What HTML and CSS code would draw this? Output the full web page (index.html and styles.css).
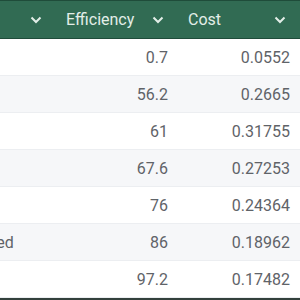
FILE: index.html
```html
<!DOCTYPE html>
<html lang="en">
<head>
  <meta charset="UTF-8" />
  <meta name="viewport" content="width=device-width, initial-scale=1" />
  <title>Runs</title>
  <link rel="stylesheet" href="styles.css">
</head>
<body>
  <div class="viewport">
    <div class="grid">
      <div class="head">
        <div class="cell"><span></span><svg class="chev" viewBox="0 0 12 8"><path d="M1.5 1.5 6 6l4.5-4.5"/></svg></div>
        <div class="cell"><span>Efficiency</span><svg class="chev" viewBox="0 0 12 8"><path d="M1.5 1.5 6 6l4.5-4.5"/></svg></div>
        <div class="cell"><span>Cost</span><svg class="chev" viewBox="0 0 12 8"><path d="M1.5 1.5 6 6l4.5-4.5"/></svg></div>
      </div>

      <div class="row">
        <div class="cell text"></div>
        <div class="cell num">0.7</div>
        <div class="cell num">0.0552</div>
      </div>
      <div class="row">
        <div class="cell text"></div>
        <div class="cell num">56.2</div>
        <div class="cell num">0.2665</div>
      </div>
      <div class="row">
        <div class="cell text"></div>
        <div class="cell num">61</div>
        <div class="cell num">0.31755</div>
      </div>
      <div class="row">
        <div class="cell text"></div>
        <div class="cell num">67.6</div>
        <div class="cell num">0.27253</div>
      </div>
      <div class="row">
        <div class="cell text"></div>
        <div class="cell num">76</div>
        <div class="cell num">0.24364</div>
      </div>
      <div class="row">
        <div class="cell text">Completed</div>
        <div class="cell num">86</div>
        <div class="cell num">0.18962</div>
      </div>
      <div class="row">
        <div class="cell text"></div>
        <div class="cell num">97.2</div>
        <div class="cell num">0.17482</div>
      </div>
      <div class="foot"></div>
    </div>
  </div>
</body>
</html>
```

FILE: styles.css
```css
:root {
  --header-bg: #316b53;
  --header-edge: #1f4c3a;
  --header-text: #e3eee8;
  --text-color: #5f6368;
  --stripe: #f6f7f9;
  --line: #eceef1;
  --foot-bg: #33403c;
}

body {
  margin: 0;
  font-family: Roboto, 'Liberation Sans', sans-serif;
  background: white;
}

.viewport {
  width: 300px;
  height: 300px;
  overflow: hidden;
}

.grid {
  margin-left: -74px;
  width: 374px;
}

.head,
.row {
  display: grid;
  grid-template-columns: 130px 122px 122px;
}

.head {
  height: 37px;
  background-color: var(--header-bg);
  border-top: 1px solid var(--header-edge);
  border-bottom: 1px solid var(--header-edge);
  color: var(--header-text);
  font-size: 16px;
}

.head .cell {
  display: flex;
  align-items: center;
  justify-content: space-between;
  padding: 0 14px 0 10px;
}

.chev {
  width: 12px;
  height: 8px;
  fill: none;
  stroke: var(--header-text);
  stroke-width: 2;
}

.row {
  height: 36px;
  border-bottom: 1px solid var(--line);
  color: var(--text-color);
  font-size: 16px;
}

.row:nth-child(odd) {
  background-color: var(--stripe);
}

.row .cell {
  display: flex;
  align-items: center;
  padding: 0 10px;
  white-space: nowrap;
}

.row .num {
  justify-content: flex-end;
}

.foot {
  height: 10px;
  background-color: var(--foot-bg);
}
```
